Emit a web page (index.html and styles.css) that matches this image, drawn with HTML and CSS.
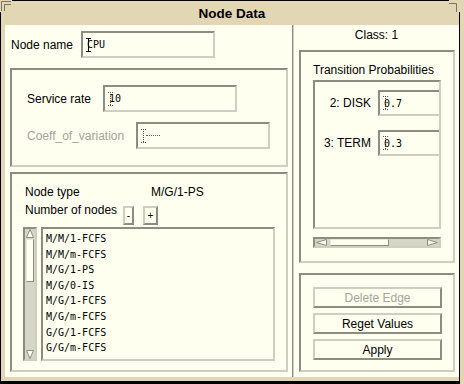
FILE: index.html
```html
<!DOCTYPE html>
<html lang="en">
<head>
  <meta charset="UTF-8" />
  <title>Node Data</title>
  <link rel="stylesheet" href="styles.css">
</head>
<body>
  <div class="window">
    <svg class="corner corner-tl" width="12" height="12" viewBox="0 0 12 12"><path d="M0 12V0H12" stroke="#e2d6b5" stroke-width="2" fill="none"/><path d="M1.5 11V1.5H11M4.5 11V4.5H11" stroke="#7a7466" fill="none"/></svg>
    <svg class="corner corner-tr" width="12" height="12" viewBox="0 0 12 12"><path d="M0 0.5H12M10.5 0V12" stroke="#e2d6b5" stroke-width="2" fill="none"/><path d="M0 3.5H7.5V12" stroke="#7a7466" fill="none"/></svg>

    <div class="titlebar">Node Data</div>

    <div class="content">
      <div class="col-left">
        <div class="name-row">
          <label class="lbl-name">Node name</label>
          <div class="field field-name"><svg class="caret" width="5" height="14" viewBox="0 0 5 14"><path d="M0 0.5H5M2.5 0V14M0 13.5H5"/></svg>CPU</div>
        </div>

        <div class="group group-service">
          <div class="field-row">
            <label class="lbl-rate">Service rate</label>
            <div class="field"><svg class="caret dotted" width="5" height="14" viewBox="0 0 5 14"><path d="M0 0.5H5M2.5 0V14M0 13.5H5"/></svg>10</div>
          </div>
          <div class="field-row disabled">
            <label class="lbl-coeff">Coeff_of_variation</label>
            <div class="field"><svg class="caret dotted" width="5" height="14" viewBox="0 0 5 14"><path d="M0 0.5H5M2.5 0V14M0 13.5H5"/></svg><span class="dash"></span></div>
          </div>
        </div>

        <div class="group group-type">
          <div class="type-row">
            <span class="type-key">Node type</span>
            <span>M/G/1-PS</span>
          </div>
          <div class="count-row">
            <span class="count-key">Number of nodes</span>
            <button type="button" class="btn-small btn-minus">-</button>
            <button type="button" class="btn-small btn-plus">+</button>
          </div>
          <div class="list-wrap">
            <div class="vscroll">
              <svg class="arrow" width="8" height="9" viewBox="0 0 8 9"><path d="M4 0.5L7.5 8.5H0.5Z"/></svg>
              <div class="vthumb"></div>
              <div class="fill"></div>
              <svg class="arrow" width="8" height="9" viewBox="0 0 8 9"><path d="M4 8.5L7.5 0.5H0.5Z"/></svg>
            </div>
            <ul class="type-list">
              <li>M/M/1-FCFS</li>
              <li>M/M/m-FCFS</li>
              <li>M/G/1-PS</li>
              <li>M/G/0-IS</li>
              <li>M/G/1-FCFS</li>
              <li>M/G/m-FCFS</li>
              <li>G/G/1-FCFS</li>
              <li>G/G/m-FCFS</li>
            </ul>
          </div>
        </div>
      </div>

      <div class="divider"></div>

      <div class="col-right">
        <div class="class-label">Class: 1</div>

        <div class="group group-trans">
          <div class="group-title">Transition Probabilities</div>
          <div class="viewport">
            <div class="prob-row">
              <label>2: DISK</label>
              <div class="field"><svg class="caret dotted" width="5" height="14" viewBox="0 0 5 14"><path d="M0 0.5H5M2.5 0V14M0 13.5H5"/></svg>0.7</div>
            </div>
            <div class="prob-row">
              <label>3: TERM</label>
              <div class="field"><svg class="caret dotted" width="5" height="14" viewBox="0 0 5 14"><path d="M0 0.5H5M2.5 0V14M0 13.5H5"/></svg>0.3</div>
            </div>
          </div>
          <div class="hscroll">
            <svg class="arrow" width="11" height="7" viewBox="0 0 11 7"><path d="M0.5 3.5L10.5 0.5V6.5Z"/></svg>
            <div class="hthumb"></div>
            <div class="fill"></div>
            <svg class="arrow" width="11" height="7" viewBox="0 0 11 7"><path d="M10.5 3.5L0.5 0.5V6.5Z"/></svg>
          </div>
        </div>

        <div class="group group-actions">
          <button type="button" class="btn disabled">Delete Edge</button>
          <button type="button" class="btn">Reget Values</button>
          <button type="button" class="btn">Apply</button>
        </div>
      </div>
    </div>
  </div>
</body>
</html>
```

FILE: styles.css
```css
* {
    box-sizing: border-box;
}
html, body {
    margin: 0;
    padding: 0;
}
body {
    width: 464px;
    height: 384px;
    background: #e2d6b5;
    font-family: "Liberation Sans", Arial, sans-serif;
    font-size: 12px;
    color: #000;
    overflow: hidden;
}
.window {
    position: relative;
    width: 460px;
    height: 384px;
    background: #e2d6b5;
    border-top: 1px solid #000;
    border-left: 1px solid #000;
    border-right: 1px solid #000;
    border-bottom: 3px solid #000;
    padding: 0 0 4px 4px;
    display: flex;
    flex-direction: column;
}
.corner {
    position: absolute;
}
.corner-tl {
    top: -1px;
    left: -1px;
}
.corner-tr {
    top: -1px;
    right: -2px;
}
.titlebar {
    height: 24px;
    display: flex;
    align-items: center;
    justify-content: center;
    padding-top: 1px;
    font-size: 13.5px;
    font-weight: 700;
}
.content {
    flex: 1;
    display: flex;
    background: #fffff0;
}
.col-left {
    width: 287px;
}
.divider {
    width: 2px;
    border-left: 1px solid #8c8c80;
    border-right: 1px solid #d0d0c0;
}
.col-right {
    width: 165px;
}

/* sunken and raised frames */
.field, .group, .viewport, .type-list, .vscroll, .hscroll {
    border: 2px solid;
    border-color: #8c8c80 #cfcfbf #cfcfbf #8c8c80;
}
.field {
    height: 27px;
    display: flex;
    align-items: center;
    padding-left: 3px;
    background: #fffff0;
    font-family: "DejaVu Sans Mono", monospace;
    font-size: 10px;
    overflow: hidden;
    white-space: nowrap;
}
.caret {
    flex: none;
    margin-right: -4px;
    fill: none;
    stroke: #000;
}
.caret.dotted {
    stroke: #555;
    stroke-dasharray: 1 1;
}
.dash {
    width: 14px;
    margin-left: 4px;
    border-top: 1px dotted #666;
}

.name-row {
    display: flex;
    align-items: center;
    padding: 6px 0 0 6px;
}
.lbl-name {
    width: 70px;
}
.field-name {
    width: 134px;
}

.group-service {
    margin: 10px 0 0 5px;
    width: 278px;
    height: 99px;
    padding: 15px 0 0 15px;
}
.field-row {
    display: flex;
    align-items: center;
}
.field-row + .field-row {
    margin-top: 10px;
}
.field-row .field {
    width: 134px;
}
.lbl-rate {
    width: 76px;
}
.lbl-coeff {
    width: 109px;
}
.disabled {
    color: #a4a49a;
}

.group-type {
    margin: 5px 0 0 5px;
    width: 278px;
    height: 200px;
    padding: 11px 0 0 11px;
}
.type-row, .count-row {
    display: flex;
    padding-left: 2px;
    line-height: 14px;
}
.type-key {
    width: 126px;
}
.count-row {
    margin-top: 4px;
    align-items: flex-start;
}
.count-key {
    width: 98px;
}
.btn-small {
    margin: 3px 0 0;
    padding: 0;
    height: 19px;
    font-family: "Liberation Sans", Arial, sans-serif;
    font-size: 10px;
    color: #000;
    background: #fffff0;
    border: 2px solid;
    border-color: #cfcfbf #8c8c80 #8c8c80 #cfcfbf;
}
.btn-minus {
    width: 11px;
}
.btn-plus {
    width: 15px;
    margin-left: 9px;
}
.list-wrap {
    display: flex;
    margin-top: 2px;
    height: 134px;
}
.vscroll {
    width: 14px;
    padding: 0 1px;
    background: #d6d6c6;
    display: flex;
    flex-direction: column;
    align-items: center;
}
.arrow {
    flex: none;
    fill: #fffff0;
    stroke: #8c8c80;
}
.vthumb {
    margin-top: 1px;
    width: 8px;
    height: 43px;
    background: #fffff0;
    border: 1px solid;
    border-color: #e8e8d8 #8c8c80 #8c8c80 #e8e8d8;
}
.fill {
    flex: 1;
}
.type-list {
    margin: 0 0 0 4px;
    padding: 2px 0 0 3px;
    width: 234px;
    list-style: none;
    background: #fffff0;
    font-family: "DejaVu Sans Mono", monospace;
    font-size: 10px;
    line-height: 15.6px;
}

.class-label {
    height: 25px;
    padding-top: 3px;
    line-height: 14px;
    text-align: center;
}
.group-trans {
    margin-left: 5px;
    width: 156px;
    height: 213px;
    padding: 11px 0 0 12px;
}
.group-title {
    line-height: 14px;
    white-space: nowrap;
}
.viewport {
    margin-top: 3px;
    width: 128px;
    height: 149px;
    padding-top: 8px;
    overflow: hidden;
}
.prob-row {
    display: flex;
    align-items: center;
}
.prob-row + .prob-row {
    margin-top: 14px;
}
.prob-row label {
    flex: none;
    width: 56px;
    text-align: right;
    white-space: nowrap;
}
.prob-row .field {
    flex: none;
    margin-left: 7px;
    width: 80px;
    height: 26px;
}
.hscroll {
    margin-top: 8px;
    width: 128px;
    height: 11px;
    padding: 0 1px;
    background: #d6d6c6;
    display: flex;
    align-items: center;
}
.hthumb {
    margin-left: 3px;
    width: 59px;
    height: 7px;
    background: #fffff0;
    border: 1px solid;
    border-color: #e8e8d8 #8c8c80 #8c8c80 #e8e8d8;
}

.group-actions {
    margin: 10px 0 0 5px;
    width: 156px;
    height: 99px;
    padding: 12px 0 0 12px;
    display: flex;
    flex-direction: column;
    gap: 5px;
}
.btn {
    margin: 0;
    padding: 0;
    width: 129px;
    height: 21px;
    font-family: "Liberation Sans", Arial, sans-serif;
    font-size: 12px;
    color: #000;
    background: #fffff0;
    border: 2px solid;
    border-color: #cfcfbf #8c8c80 #8c8c80 #cfcfbf;
}
.btn.disabled {
    color: #a4a49a;
}
```
